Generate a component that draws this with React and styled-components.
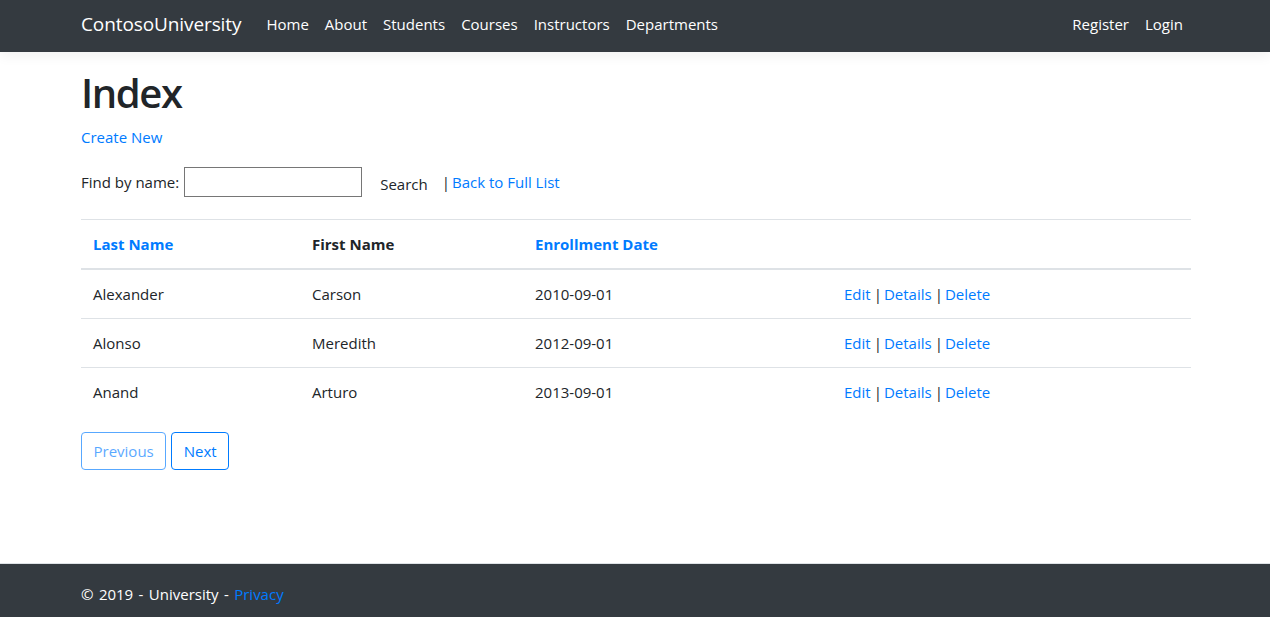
import React from "react";
import styled, { createGlobalStyle } from "styled-components";

const Global = createGlobalStyle`
  * { box-sizing: border-box; }
  html, body { margin: 0; padding: 0; }
  body {
    font-family: "Open Sans", "Noto Sans", sans-serif;
    font-size: 15px;
    line-height: 24px;
    color: #212529;
    background: #fff;
  }
`;

const Page = styled.div`
  min-height: 100vh;
  display: flex;
  flex-direction: column;
`;

const NavBar = styled.nav`
  height: 52px;
  background: #343a40;
  box-shadow: 0 4px 12px rgba(0, 0, 0, 0.06);
  margin-bottom: 17px;
`;

const Container = styled.div`
  width: 1140px;
  margin: 0 auto;
  padding: 0 14px 0 16px;
`;

const NavInner = styled(Container)`
  height: 100%;
  display: flex;
  align-items: center;
  padding-bottom: 4px;
`;

const Brand = styled.a`
  color: #fff;
  font-size: 19px;
  margin-right: 17px;
  letter-spacing: -0.1px;
  text-decoration: none;
  white-space: nowrap;
`;

const NavList = styled.div`
  display: flex;
  align-items: center;
  flex: ${(p) => (p.$grow ? 1 : "none")};
`;

const NavLink = styled.a`
  color: #fff;
  padding: 0 8px;
  text-decoration: none;
  white-space: nowrap;
`;

const Main = styled(Container)`
  flex: 1;
`;

const Title = styled.h1`
  font-size: 40px;
  font-weight: 600;
  line-height: 48px;
  margin: 0 0 8px;
  letter-spacing: -1.4px;
`;

const Para = styled.p`
  margin: 0 0 16px;
  display: flex;
  align-items: center;
`;

const SearchPara = styled(Para)`
  height: 38px;
  padding-bottom: 4px;
`;

const Link = styled.a`
  color: #007bff;
  text-decoration: none;
`;

const Input = styled.input`
  width: 178px;
  height: 30px;
  border: 1px solid #767676;
  margin: 0 0 0 5px;
  padding: 1px 2px;
  font: inherit;
`;

const PlainButton = styled.button`
  background: transparent;
  border: 1px solid transparent;
  font: inherit;
  color: #212529;
  padding: 6px 12px;
  line-height: 24px;
  margin: 0 1px -4px 5px;
`;

const Pipe = styled.span`
  margin-right: 2px;
`;

const Table = styled.table`
  width: 100%;
  border-collapse: collapse;
  margin-bottom: 16px;
`;

const Th = styled.th`
  text-align: left;
  font-weight: 700;
  padding: 12px;
  border-top: 1px solid #dee2e6;
  border-bottom: 2px solid #dee2e6;
  width: ${(p) => p.$w}px;
`;

const Td = styled.td`
  padding: 12px;
  border-top: 1px solid #dee2e6;
  vertical-align: top;
`;

const Sep = styled.span`
  margin: 0 2px 0 3px;
`;

const Pager = styled.div`
  display: flex;
  gap: 5px;
`;

const PageBtn = styled.a`
  display: inline-block;
  padding: 6px 11.5px;
  line-height: 24px;
  border: 1px solid #007bff;
  border-radius: 4px;
  color: #007bff;
  text-decoration: none;
  opacity: ${(p) => (p.$disabled ? 0.65 : 1)};
`;

const Footer = styled.footer`
  height: 54px;
  background: #343a40;
  border-top: 1px solid #dee2e6;
  color: #fff;
  display: flex;
  align-items: center;
`;

const FooterInner = styled(Container)`
  padding-top: 7px;
  word-spacing: 1.5px;
`;

const rows = [
  ["Alexander", "Carson", "2010-09-01"],
  ["Alonso", "Meredith", "2012-09-01"],
  ["Anand", "Arturo", "2013-09-01"],
];

export default function App() {
  return (
    <Page>
      <Global />
      <NavBar>
        <NavInner>
          <Brand href="#">ContosoUniversity</Brand>
          <NavList $grow>
            {["Home", "About", "Students", "Courses", "Instructors", "Departments"].map((l) => (
              <NavLink key={l} href="#">{l}</NavLink>
            ))}
          </NavList>
          <NavList>
            <NavLink href="#">Register</NavLink>
            <NavLink href="#">Login</NavLink>
          </NavList>
        </NavInner>
      </NavBar>
      <Main>
        <Title>Index</Title>
        <Para>
          <Link href="#">Create New</Link>
        </Para>
        <form onSubmit={(e) => e.preventDefault()}>
          <SearchPara>
            Find by name:
            <Input type="text" />
            <PlainButton type="submit">Search</PlainButton>
            <Pipe>|</Pipe>
            <Link href="#">Back to Full List</Link>
          </SearchPara>
        </form>
        <Table>
          <thead>
            <tr>
              <Th $w={219}><Link href="#">Last Name</Link></Th>
              <Th $w={223}>First Name</Th>
              <Th $w={309}><Link href="#">Enrollment Date</Link></Th>
              <Th />
            </tr>
          </thead>
          <tbody>
            {rows.map((r) => (
              <tr key={r[0]}>
                <Td>{r[0]}</Td>
                <Td>{r[1]}</Td>
                <Td>{r[2]}</Td>
                <Td>
                  <Link href="#">Edit</Link>
                  <Sep>|</Sep>
                  <Link href="#">Details</Link>
                  <Sep>|</Sep>
                  <Link href="#">Delete</Link>
                </Td>
              </tr>
            ))}
          </tbody>
        </Table>
        <Pager>
          <PageBtn $disabled href="#">Previous</PageBtn>
          <PageBtn href="#">Next</PageBtn>
        </Pager>
      </Main>
      <Footer>
        <FooterInner>
          © 2019 - University - <Link href="#">Privacy</Link>
        </FooterInner>
      </Footer>
    </Page>
  );
}
